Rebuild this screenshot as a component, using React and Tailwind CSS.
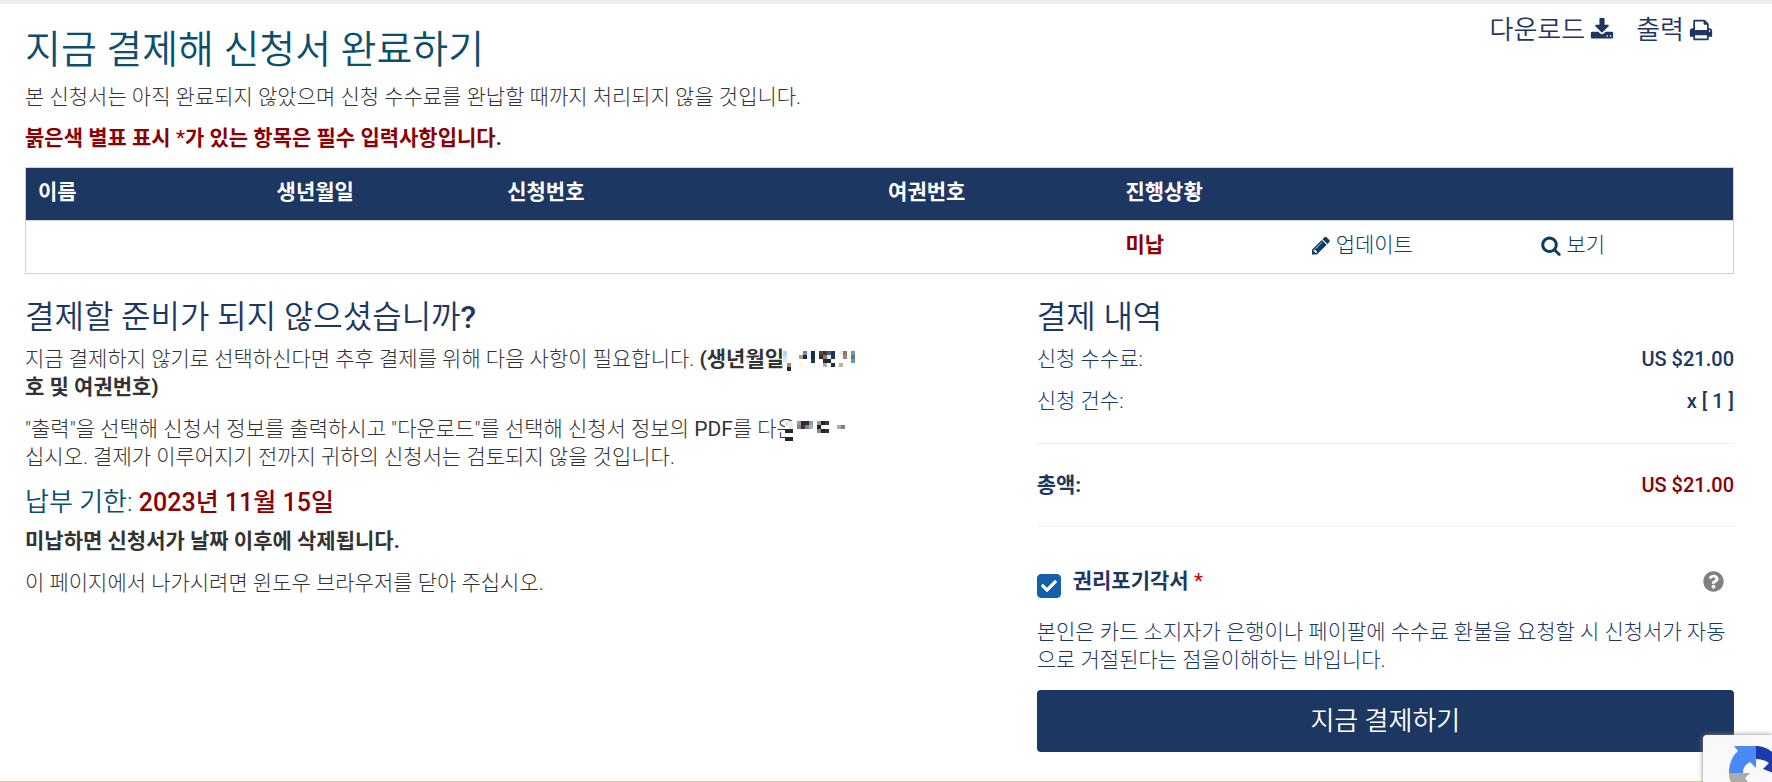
import { useState } from "react";
import { FaQuestionCircle, FaCheck } from "react-icons/fa";

const columns = [
  { label: "이름", width: "w-[14%]" },
  { label: "생년월일", width: "w-[13.5%]" },
  { label: "신청번호", width: "w-[22.3%]" },
  { label: "여권번호", width: "w-[13.9%]" },
  { label: "진행상황", width: "w-[10.9%]" },
  { label: "", width: "w-[13.4%]" },
  { label: "", width: "w-[12%]" },
];

// Font Awesome 4 glyphs
const Glyph = ({ d, width = 1792, className }) => (
  <svg viewBox={`0 0 ${width} 1792`} className={className} fill="currentColor" aria-hidden="true">
    <path d={d} />
  </svg>
);

const DOWNLOAD = "M1344 1344q0-26-19-45t-45-19-45 19-19 45 19 45 45 19 45-19 19-45zm256 0q0-26-19-45t-45-19-45 19-19 45 19 45 45 19 45-19 19-45zm128-224v320q0 40-28 68t-68 28h-1472q-40 0-68-28t-28-68v-320q0-40 28-68t68-28h465l135 136q58 56 136 56t136-56l136-136h464q40 0 68 28t28 68zm-325-569q17 41-14 70l-448 448q-18 19-45 19t-45-19l-448-448q-31-29-14-70 17-39 59-39h256v-448q0-26 19-45t45-19h256q26 0 45 19t19 45v448h256q42 0 59 39z";
const PRINT = "M448 1536h896v-256h-896v256zm0-640h896v-384h-160q-40 0-68-28t-28-68v-160h-640v640zm1152 64q0-26-19-45t-45-19-45 19-19 45 19 45 45 19 45-19 19-45zm128 0v416q0 13-9.500 22.500t-22.500 9.500h-224v160q0 40-28 68t-68 28h-960q-40 0-68-28t-28-68v-160h-224q-13 0-22.500-9.500t-9.500-22.500v-416q0-79 56.500-135.500t135.500-56.500h64v-544q0-40 28-68t68-28h672q40 0 88 20t76 48l152 152q28 28 48 76t20 88v256h64q79 0 135.500 56.500t56.500 135.500z";
const PENCIL = "M363 1536l91-91-235-235-91 91v107h128v128h107zm523-928q0-22-22-22-10 0-17 7l-542 542q-7 7-7 17 0 22 22 22 10 0 17-7l542-542q7-7 7-17zm-54-192l416 416-832 832H0v-416zm683 96q0 53-37 90l-166 166-416-416 166-165q36-38 90-38 53 0 91 38l235 234q37 39 37 91z";
const SEARCH = "M1152 832q0-185-131.500-316.500T704 384 387.500 515.500 256 832t131.500 316.500T704 1280t316.500-131.500T1152 832zm512 832q0 52-38 90t-90 38q-54 0-90-38l-343-342q-179 124-399 124-143 0-273.500-55.500t-225-150-150-225T0 832t55.500-273.500 150-225 225-150T704 128t273.500 55.500 225 150 150 225T1408 832q0 220-124 399l343 343q37 37 37 90z";

// Pixelated patches: [column, row, colour], 4px cells
const dateMosaic = [
  [0, 0, "#b8cfe4"], [0, 1, "#cfe0ee"], [0, 2, "#dcecf6"], [1, 3, "#a08878"], [1, 4, "#24262a"],
  [4, 1, "#b09a8a"], [4, 3, "#fdf8cf"], [5, 0, "#6f87a8"], [5, 1, "#2b2a2e"], [6, 0, "#e8f6fb"], [6, 1, "#e4f2fa"],
  [7, 0, "#16303a"], [7, 1, "#16303a"], [7, 2, "#1d3a42"], [9, 0, "#5a4436"], [9, 1, "#3a2c28"], [10, 0, "#3c3a30"],
  [10, 1, "#8b7664"], [10, 2, "#2a2a2c"], [10, 3, "#a9b3b5"], [11, 0, "#4a6078"], [11, 1, "#dfeaf0"], [11, 2, "#242424"],
  [12, 0, "#1f3358"], [12, 1, "#1f3358"], [12, 3, "#1b2b4d"], [13, 1, "#fdf8cf"], [14, 0, "#dff0fa"], [14, 3, "#c0b48c"],
  [15, 0, "#8f7668"], [15, 1, "#9c8270"], [16, 1, "#fdf6c8"], [17, 0, "#7495b4"], [17, 1, "#4f7f98"], [17, 2, "#6b98b0"],
];
const textMosaic = [
  [0, 0, "#dde6ee"], [1, 0, "#e6eef6"], [1, 1, "#e2ecf6"], [0, 2, "#2a2a2a"], [1, 2, "#2a2a2a"], [0, 4, "#242424"], [1, 4, "#242424"],
  [3, 0, "#a89890"], [3, 1, "#8c7c78"], [4, 0, "#2c2c2c"], [4, 1, "#383636"], [5, 0, "#2a2e34"], [5, 1, "#7b8894"],
  [6, 0, "#8a9aa8"], [6, 1, "#a4b2bf"], [8, 0, "#9a9896"], [8, 1, "#242424"], [8, 2, "#8a8886"],
  [9, 0, "#242424"], [10, 0, "#3a3a3a"], [9, 2, "#242424"], [10, 2, "#2e2e2e"], [13, 1, "#b8a8b0"], [14, 1, "#808080"],
];

const Mosaic = ({ cells, className }) => (
  <svg viewBox="0 0 76 20" shapeRendering="crispEdges" className={`absolute top-1 w-[76px] h-5 ${className}`} aria-hidden="true">
    <rect width="76" height="20" fill="white" />
    {cells.map(([x, y, fill]) => <rect key={`${x}-${y}`} x={x * 4} y={y * 4} width="4" height="4" fill={fill} />)}
  </svg>
);

function RecaptchaBadge() {
  return (
    <div className="absolute right-0 bottom-0 w-[69px] h-[47px] overflow-hidden rounded-tl-sm bg-[#f9f9f9] shadow-[0_0_5px_gray]">
      <svg viewBox="0 0 69 47" className="w-full h-full" aria-hidden="true">
        <path d="M31 11H53V33L47 27C42 30 40 33 40 38H26C26 29 29 21 35 16z" fill="#4a8af4" />
        <path d="M53 11C60 11 66 14 70 18V38L60 34L66 28C62 25 57 24 53 24z" fill="#1c3aa9" />
        <path d="M26 38H47L42 43L45 47H28C26 44 26 41 26 38z" fill="#ababab" />
      </svg>
    </div>
  );
}

function App() {
  const [agreed, setAgreed] = useState(true);

  return (
    <div
      lang="ko"
      className="relative border-t-4 border-[#eeeeee] bg-white font-['Roboto','Noto_Sans_CJK_KR',sans-serif] text-[21px] leading-7 font-light text-[#333333]"
    >
      <main className="pl-[25px] pr-[38px] pb-[29px]">
        <header className="flex justify-between items-start">
          <h1 className="pt-[22px] text-[39px] leading-12 font-[350] text-[#0b4f6c]">지금 결제해 신청서 완료하기</h1>
          <nav className="flex gap-[22px] pt-2 pr-[21px] text-[26px] leading-9 font-[350] text-[#1d3763]">
            <a href="#download" className="flex items-center gap-[5px]">다운로드<Glyph d={DOWNLOAD} className="w-6 h-6" /></a>
            <a href="#print" className="flex items-center gap-[5px]">출력<Glyph d={PRINT} className="w-6 h-6" /></a>
          </nav>
        </header>

        <p className="mt-[9px]">본 신청서는 아직 완료되지 않았으며 신청 수수료를 완납할 때까지 처리되지 않을 것입니다.</p>
        <p className="mt-[13px] font-bold text-[#8b0000]">붉은색 별표 표시 <span className="font-normal">*</span>가 있는 항목은 필수 입력사항입니다.</p>

        <table className="mt-[15px] w-full table-fixed border-collapse border border-[#cfd3d8] text-left">
          <thead className="bg-[#1d3763] text-white">
            <tr className="h-[53px]">
              {columns.map((col, i) => (
                <th key={i} className={`${col.width} pl-3 pb-1 font-bold`}>{col.label}</th>
              ))}
            </tr>
          </thead>
          <tbody>
            <tr className="h-[53px] border-t border-[#cfd3d8] text-[#0b3d62]">
              <td /><td /><td /><td />
              <td className="pl-3 pb-1 font-bold text-[#8b0000]">미납</td>
              <td className="pl-3 pb-1">
                <a href="#update" className="flex items-center gap-[6px]"><Glyph d={PENCIL} width={1536} className="w-[18px] h-[21px]" />업데이트</a>
              </td>
              <td className="pl-3 pb-1">
                <a href="#view" className="flex items-center gap-[6px]"><Glyph d={SEARCH} width={1664} className="w-5 h-[21px]" />보기</a>
              </td>
            </tr>
          </tbody>
        </table>

        <div className="mt-[19px] flex justify-between items-start">
          <section className="w-[49%]">
            <h2 className="text-[32px] leading-12 font-[350] text-[#1d3763]">결제할 준비가 되지 않으셨습니까<span className="font-medium">?</span></h2>
            <p className="mt-1">
              지금 결제하지 않기로 선택하신다면 추후 결제를 위해 다음 사항이 필요합니다.{" "}
              <b className="font-bold">
                <span className="relative">(생년월일,<Mosaic cells={dateMosaic} className="left-[84px]" /></span>
                <br />호 및 여권번호)
              </b>
            </p>
            <p className="mt-[14px]">
              "출력"을 선택해 신청서 정보를 출력하시고 "다운로드"를 선택해 신청서 정보의 <span className="font-normal">PDF</span>를{" "}
              <span className="relative">다운<Mosaic cells={textMosaic} className="left-[28px]" /></span><br />
              십시오. 결제가 이루어지기 전까지 귀하의 신청서는 검토되지 않을 것입니다.
            </p>
            <h3 className="mt-[13px] text-[26px] leading-9 font-[350] text-[#0b4f6c]">납부 기한: <span className="text-[25px] font-medium text-[#8b0000]">2023년 11월 15일</span></h3>
            <p className="mt-[6px] font-bold">미납하면 신청서가 날짜 이후에 삭제됩니다.</p>
            <p className="mt-[14px]">이 페이지에서 나가시려면 윈도우 브라우저를 닫아 주십시오.</p>
          </section>

          <section className="w-[40.8%] text-[#1d3763]">
            <h2 className="text-[32px] leading-12 font-[350]">결제 내역</h2>
            <dl>
              <div className="mt-1 flex justify-between"><dt>신청 수수료:</dt><dd className="text-[20px] font-medium">US $21.00</dd></div>
              <div className="mt-[14px] flex justify-between"><dt>신청 건수:</dt><dd className="text-[20px] font-medium">x [ 1 ]</dd></div>
              <div className="mt-7 flex justify-between border-y border-[#eeeeee] py-[27px]">
                <dt className="font-bold">총액:</dt><dd className="text-[20px] font-medium text-[#8b0000]">US $21.00</dd>
              </div>
            </dl>
            <div className="mt-10 flex items-start">
              <span className="relative mt-[7px] w-6 h-6">
                <input
                  id="waiver"
                  type="checkbox"
                  checked={agreed}
                  onChange={(e) => setAgreed(e.target.checked)}
                  className="block w-6 h-6 appearance-none rounded-sm border border-[#1460aa] checked:bg-[#1460aa]"
                />
                {agreed && <FaCheck className="absolute left-1 top-1 w-4 h-4 text-white pointer-events-none" />}
              </span>
              <label htmlFor="waiver" className="ml-3 font-bold">권리포기각서 <span className="font-normal text-[#cc0000]">*</span></label>
              <button type="button" aria-label="도움말" className="ml-auto mr-[10px] mt-1 text-[#808080]">
                <FaQuestionCircle className="w-[21px] h-[21px]" />
              </button>
            </div>
            <p className="mt-5">본인은 카드 소지자가 은행이나 페이팔에 수수료 환불을 요청할 시 신청서가 자동으로 거절된다는 점을이해하는 바입니다.</p>
            <button type="button" className="mt-4 block w-full h-[62px] rounded-sm bg-[#1d3763] text-[26px] font-[350] text-white">지금 결제하기</button>
          </section>
        </div>
      </main>
      <div className="h-px bg-[#dccb5a]" />
      <RecaptchaBadge />
    </div>
  );
}

export default App;
